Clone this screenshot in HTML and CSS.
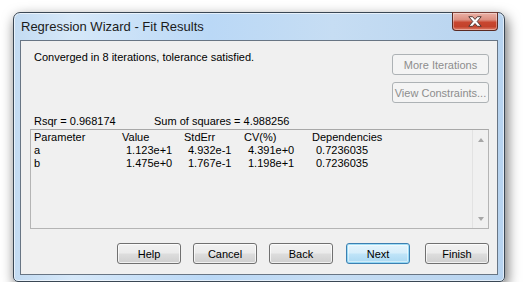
FILE: index.html
```html
<!DOCTYPE html>
<html lang="en">
<head>
    <meta charset="UTF-8">
    <title>Regression Wizard - Fit Results</title>
    <link rel="stylesheet" href="styles.css">
</head>
<body>
    <div class="window">
        <div class="titlebar">
            <span class="title">Regression Wizard - Fit Results</span>
            <button class="close" title="Close">
                <svg width="46" height="19" viewBox="0 0 46 19">
                    <polygon points="16.5,4.5 20.5,4.5 23,7.3 25.5,4.5 29.5,4.5 25.3,9.5 29.5,14.5 25.5,14.5 23,11.7 20.5,14.5 16.5,14.5 20.7,9.5"
                             fill="#ffffff" stroke="#4b3330" stroke-width="1" stroke-linejoin="round"/>
                </svg>
            </button>
        </div>

        <div class="client">
            <div class="top">
                <p class="status">Converged in 8 iterations, tolerance satisfied.</p>
                <div class="side-buttons">
                    <button class="btn" disabled>More Iterations</button>
                    <button class="btn" disabled>View Constraints...</button>
                </div>
            </div>

            <div class="stats">
                <span class="rsqr">Rsqr = 0.968174</span>
                <span>Sum of squares = 4.988256</span>
            </div>

            <div class="listbox">
                <div class="list-content">
                    <div class="row">
                        <span>Parameter</span><span>Value</span><span>StdErr</span><span>CV(%)</span><span>Dependencies</span>
                    </div>
                    <div class="row">
                        <span>a</span><span class="num">1.123e+1</span><span class="num">4.932e-1</span><span class="num">4.391e+0</span><span class="num">0.7236035</span>
                    </div>
                    <div class="row">
                        <span>b</span><span class="num">1.475e+0</span><span class="num">1.767e-1</span><span class="num">1.198e+1</span><span class="num">0.7236035</span>
                    </div>
                </div>
                <div class="scrollbar">
                    <span class="arrow up"></span>
                    <span class="arrow down"></span>
                </div>
            </div>

            <div class="footer">
                <button class="btn">Help</button>
                <button class="btn">Cancel</button>
                <button class="btn">Back</button>
                <button class="btn default">Next</button>
                <button class="btn">Finish</button>
            </div>
        </div>
    </div>
</body>
</html>
```

FILE: styles.css
```css
body {
    margin: 0;
    background: #ffffff;
    font-family: "Liberation Sans", Arial, sans-serif;
    font-size: 11px;
    color: #000;
}

/* Window frame */
.window {
    position: relative;
    margin: 12px 0 0 13px;
    width: 492px;
    height: 270px;
    box-sizing: border-box;
    padding: 0 6px 6px;
    border: 1px solid #3a4754;
    border-radius: 7px 7px 5px 5px;
    background: linear-gradient(90deg, #c3dbf2 0%, #d6e8f9 12%, #bad8f6 40%, #c6ddf3 65%, #b7d3ef 100%);
    box-shadow: inset 0 0 0 1px rgba(255, 255, 255, 0.6), 2px 5px 13px rgba(0, 0, 0, 0.6);
    display: flex;
    flex-direction: column;
}

.titlebar {
    height: 27px;
    display: flex;
    align-items: center;
    padding-left: 1px;
}

.title {
    font-size: 13px;
    color: #1b1b1b;
}

.close {
    position: absolute;
    top: -1px;
    right: 6px;
    width: 46px;
    height: 19px;
    padding: 0;
    border: 1px solid #5b2a22;
    border-top-color: #7a4038;
    border-radius: 0 0 4px 4px;
    background: linear-gradient(180deg, #eab1a6 0%, #dc8f80 40%, #c8462f 55%, #c2422b 80%, #e0806a 100%);
    box-shadow: inset 0 0 0 1px rgba(255, 255, 255, 0.35);
    display: flex;
    align-items: center;
    justify-content: center;
}

.close svg {
    display: block;
}

/* Client area */
.client {
    height: 235px;
    box-sizing: border-box;
    border: 1px solid #687584;
    background: #f0f0f0;
    padding: 0 8px 0 9px;
}

.top {
    display: flex;
    justify-content: space-between;
}

.status {
    margin: 0;
    padding: 10px 0 0 4px;
    line-height: 13px;
}

.side-buttons {
    margin-top: 13px;
    display: flex;
    flex-direction: column;
    gap: 7px;
}

.side-buttons .btn {
    width: 97px;
}

.stats {
    margin-top: 12px;
    padding-left: 4px;
    line-height: 13px;
    display: flex;
}

.rsqr {
    width: 120px;
}

/* Results list */
.listbox {
    margin-top: 1px;
    height: 100px;
    box-sizing: border-box;
    border: 1px solid #b4b4b4;
    border-top-color: #a8a8a8;
    display: flex;
}

.list-content {
    flex: 1;
    padding: 1px 0 0 3px;
}

.row {
    display: grid;
    grid-template-columns: 88px 62px 60px 68px 1fr;
    line-height: 13px;
    white-space: nowrap;
}

.num {
    padding-left: 4px;
}

.scrollbar {
    width: 15px;
    border-left: 1px solid #e2e2e2;
    display: flex;
    flex-direction: column;
    justify-content: space-between;
    align-items: center;
    padding: 8px 0 7px;
}

.arrow {
    width: 0;
    height: 0;
    border-left: 3.5px solid transparent;
    border-right: 3.5px solid transparent;
}

.arrow.up {
    border-bottom: 4px solid #a6a6a6;
}

.arrow.down {
    border-top: 4px solid #a6a6a6;
}

/* Buttons */
.btn {
    height: 21px;
    width: 64px;
    box-sizing: border-box;
    padding: 0;
    font-family: inherit;
    font-size: 11px;
    color: #000;
    border: 1px solid #707070;
    border-radius: 3px;
    background: linear-gradient(180deg, #f2f2f2 0%, #ebebeb 48%, #dddddd 52%, #cfcfcf 100%);
    box-shadow: inset 0 0 0 1px rgba(255, 255, 255, 0.7);
    white-space: nowrap;
}

.btn:disabled {
    color: #8d8d8d;
    border-color: #adb2b5;
    background: #f4f4f4;
    box-shadow: none;
}

.btn.default {
    border-color: #3c7fb1;
    background: linear-gradient(180deg, #e5f4fc 0%, #d6eefb 48%, #c0e4f8 52%, #aad8f2 100%);
    box-shadow: inset 0 0 0 1px rgba(96, 200, 240, 0.55), inset 0 0 0 2px rgba(255, 255, 255, 0.45);
}

.footer {
    margin-top: 14px;
    display: flex;
    justify-content: flex-end;
    gap: 12px;
}

.footer .default {
    margin: 0 3px 0 1px;
}
```
